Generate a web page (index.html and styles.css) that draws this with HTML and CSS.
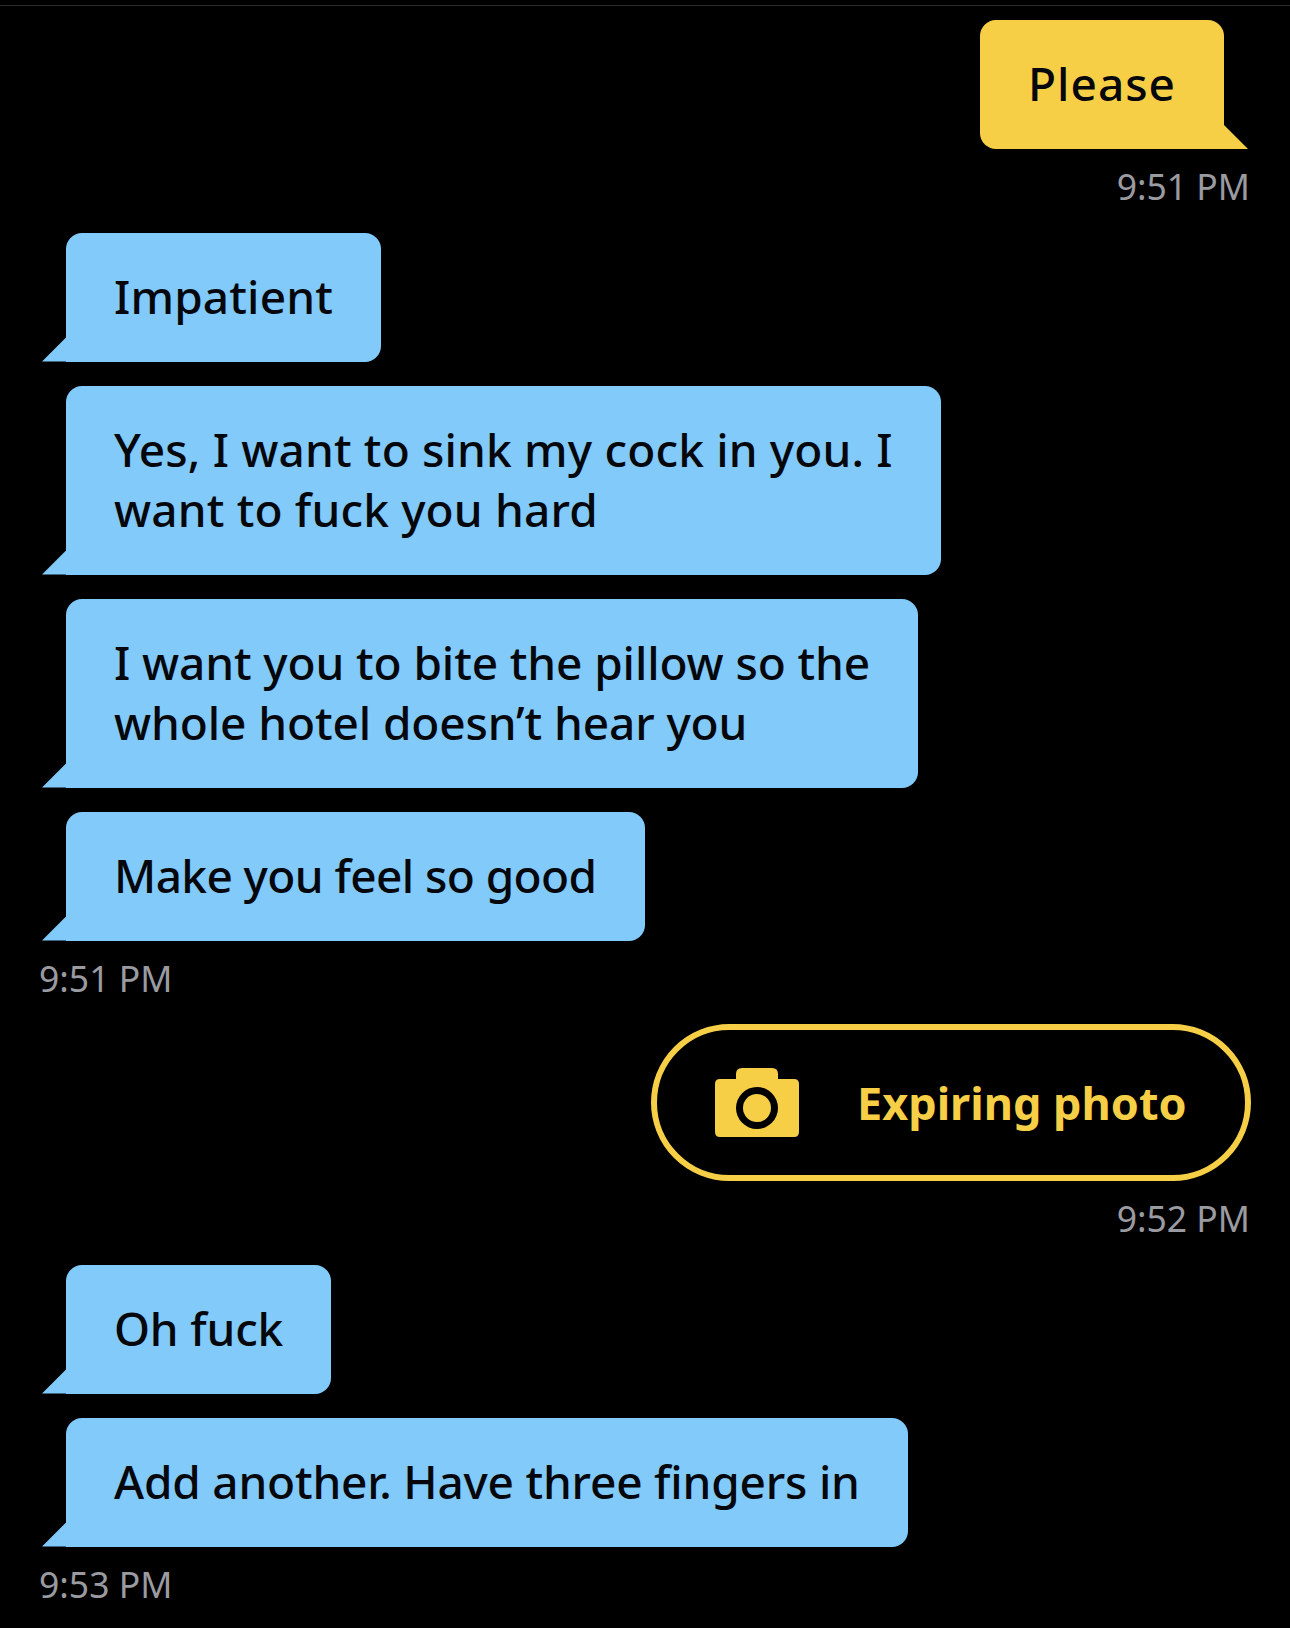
FILE: index.html
```html
<!DOCTYPE html>
<html lang="en">
<head>
    <meta charset="UTF-8">
    <title>Chat</title>
    <link rel="stylesheet" href="styles.css">
</head>
<body>
    <div class="chat">
        <div class="group sent">
            <div class="bubble track-xl">Please</div>
            <div class="time">9:51 PM</div>
        </div>

        <div class="group received">
            <div class="bubble track-l">Impatient</div>
            <div class="bubble track-l">Yes, I want to sink my cock in you. I<br>want to fuck you hard</div>
            <div class="bubble track-m">I want you to bite the pillow so the<br>whole hotel doesn’t hear you</div>
            <div class="bubble track-xs">Make you feel so good</div>
            <div class="time">9:51 PM</div>
        </div>

        <div class="group sent">
            <div class="photo">
                <svg class="photo-icon" viewBox="0 0 84 69" width="84" height="69">
                    <path fill="#f6cf47" fill-rule="evenodd" d="M5 11H21V6q0-6 6-6h30q6 0 6 6v5h16q5 0 5 5v48q0 5-5 5H5q-5 0-5-5V16q0-5 5-5ZM42 19a21 21 0 1 0 0 42a21 21 0 1 0 0-42Z"/>
                    <circle cx="42" cy="40" r="14" fill="#f6cf47"/>
                </svg>
                <span class="photo-label">Expiring photo</span>
            </div>
            <div class="time">9:52 PM</div>
        </div>

        <div class="group received">
            <div class="bubble track-s">Oh fuck</div>
            <div class="bubble track-s">Add another. Have three fingers in</div>
            <div class="time">9:53 PM</div>
        </div>
    </div>
</body>
</html>
```

FILE: styles.css
```css
:root {
    --yellow: #f6cf47;
    --blue: #81caf9;
    --grey: #9a9ba1;
}

html, body {
    margin: 0;
    padding: 0;
    background: #000;
}

body {
    height: 1628px;
    overflow: hidden;
    font-family: "Noto Sans", "Liberation Sans", sans-serif;
}

.chat {
    display: flex;
    flex-direction: column;
    gap: 25.5px;
    margin-top: 5px;
    padding: 14px 39px 0 39px;
    border-top: 1px solid #2b2b2d;
}

.group {
    display: flex;
    flex-direction: column;
    gap: 24px;
}

.sent {
    align-items: flex-end;
}

.received {
    align-items: flex-start;
}

.bubble {
    position: relative;
    padding: 33px 48px 36px;
    font-size: 46px;
    font-weight: 500;
    line-height: 60px;
    color: #05070c;
    white-space: nowrap;
}

/* spacing so each line runs as wide as in the original font */
.track-xs { letter-spacing: -0.6px; }
.track-s { letter-spacing: -0.2px; }
.track-m { letter-spacing: -0.11px; }
.track-l { letter-spacing: 0.16px; }
.track-xl { letter-spacing: 1px; }

.sent .bubble {
    margin-right: 27px;
    background: var(--yellow);
    border-radius: 16px 16px 0 16px;
}

.received .bubble {
    margin-left: 27px;
    background: var(--blue);
    border-radius: 16px 16px 16px 0;
}

/* the little tail on the bottom corner */
.bubble::after {
    content: "";
    position: absolute;
    bottom: 0;
    width: 24px;
    height: 24px;
}

.sent .bubble::after {
    left: 100%;
    background: var(--yellow);
    clip-path: polygon(0 0, 100% 100%, 0 100%);
}

.received .bubble::after {
    right: 100%;
    background: var(--blue);
    clip-path: polygon(100% 0, 100% 100%, 0 100%);
}

.time {
    margin-top: -8px;
    margin-right: 1px;
    font-size: 35.5px;
    line-height: 42px;
    color: var(--grey);
}

.photo {
    display: flex;
    align-items: center;
    box-sizing: border-box;
    width: 600px;
    height: 157px;
    padding-left: 58px;
    border: 6px solid var(--yellow);
    border-radius: 79px;
}

.photo-icon {
    margin-right: 58px;
}

.photo-label {
    font-size: 45px;
    font-weight: 700;
    color: var(--yellow);
}
```
